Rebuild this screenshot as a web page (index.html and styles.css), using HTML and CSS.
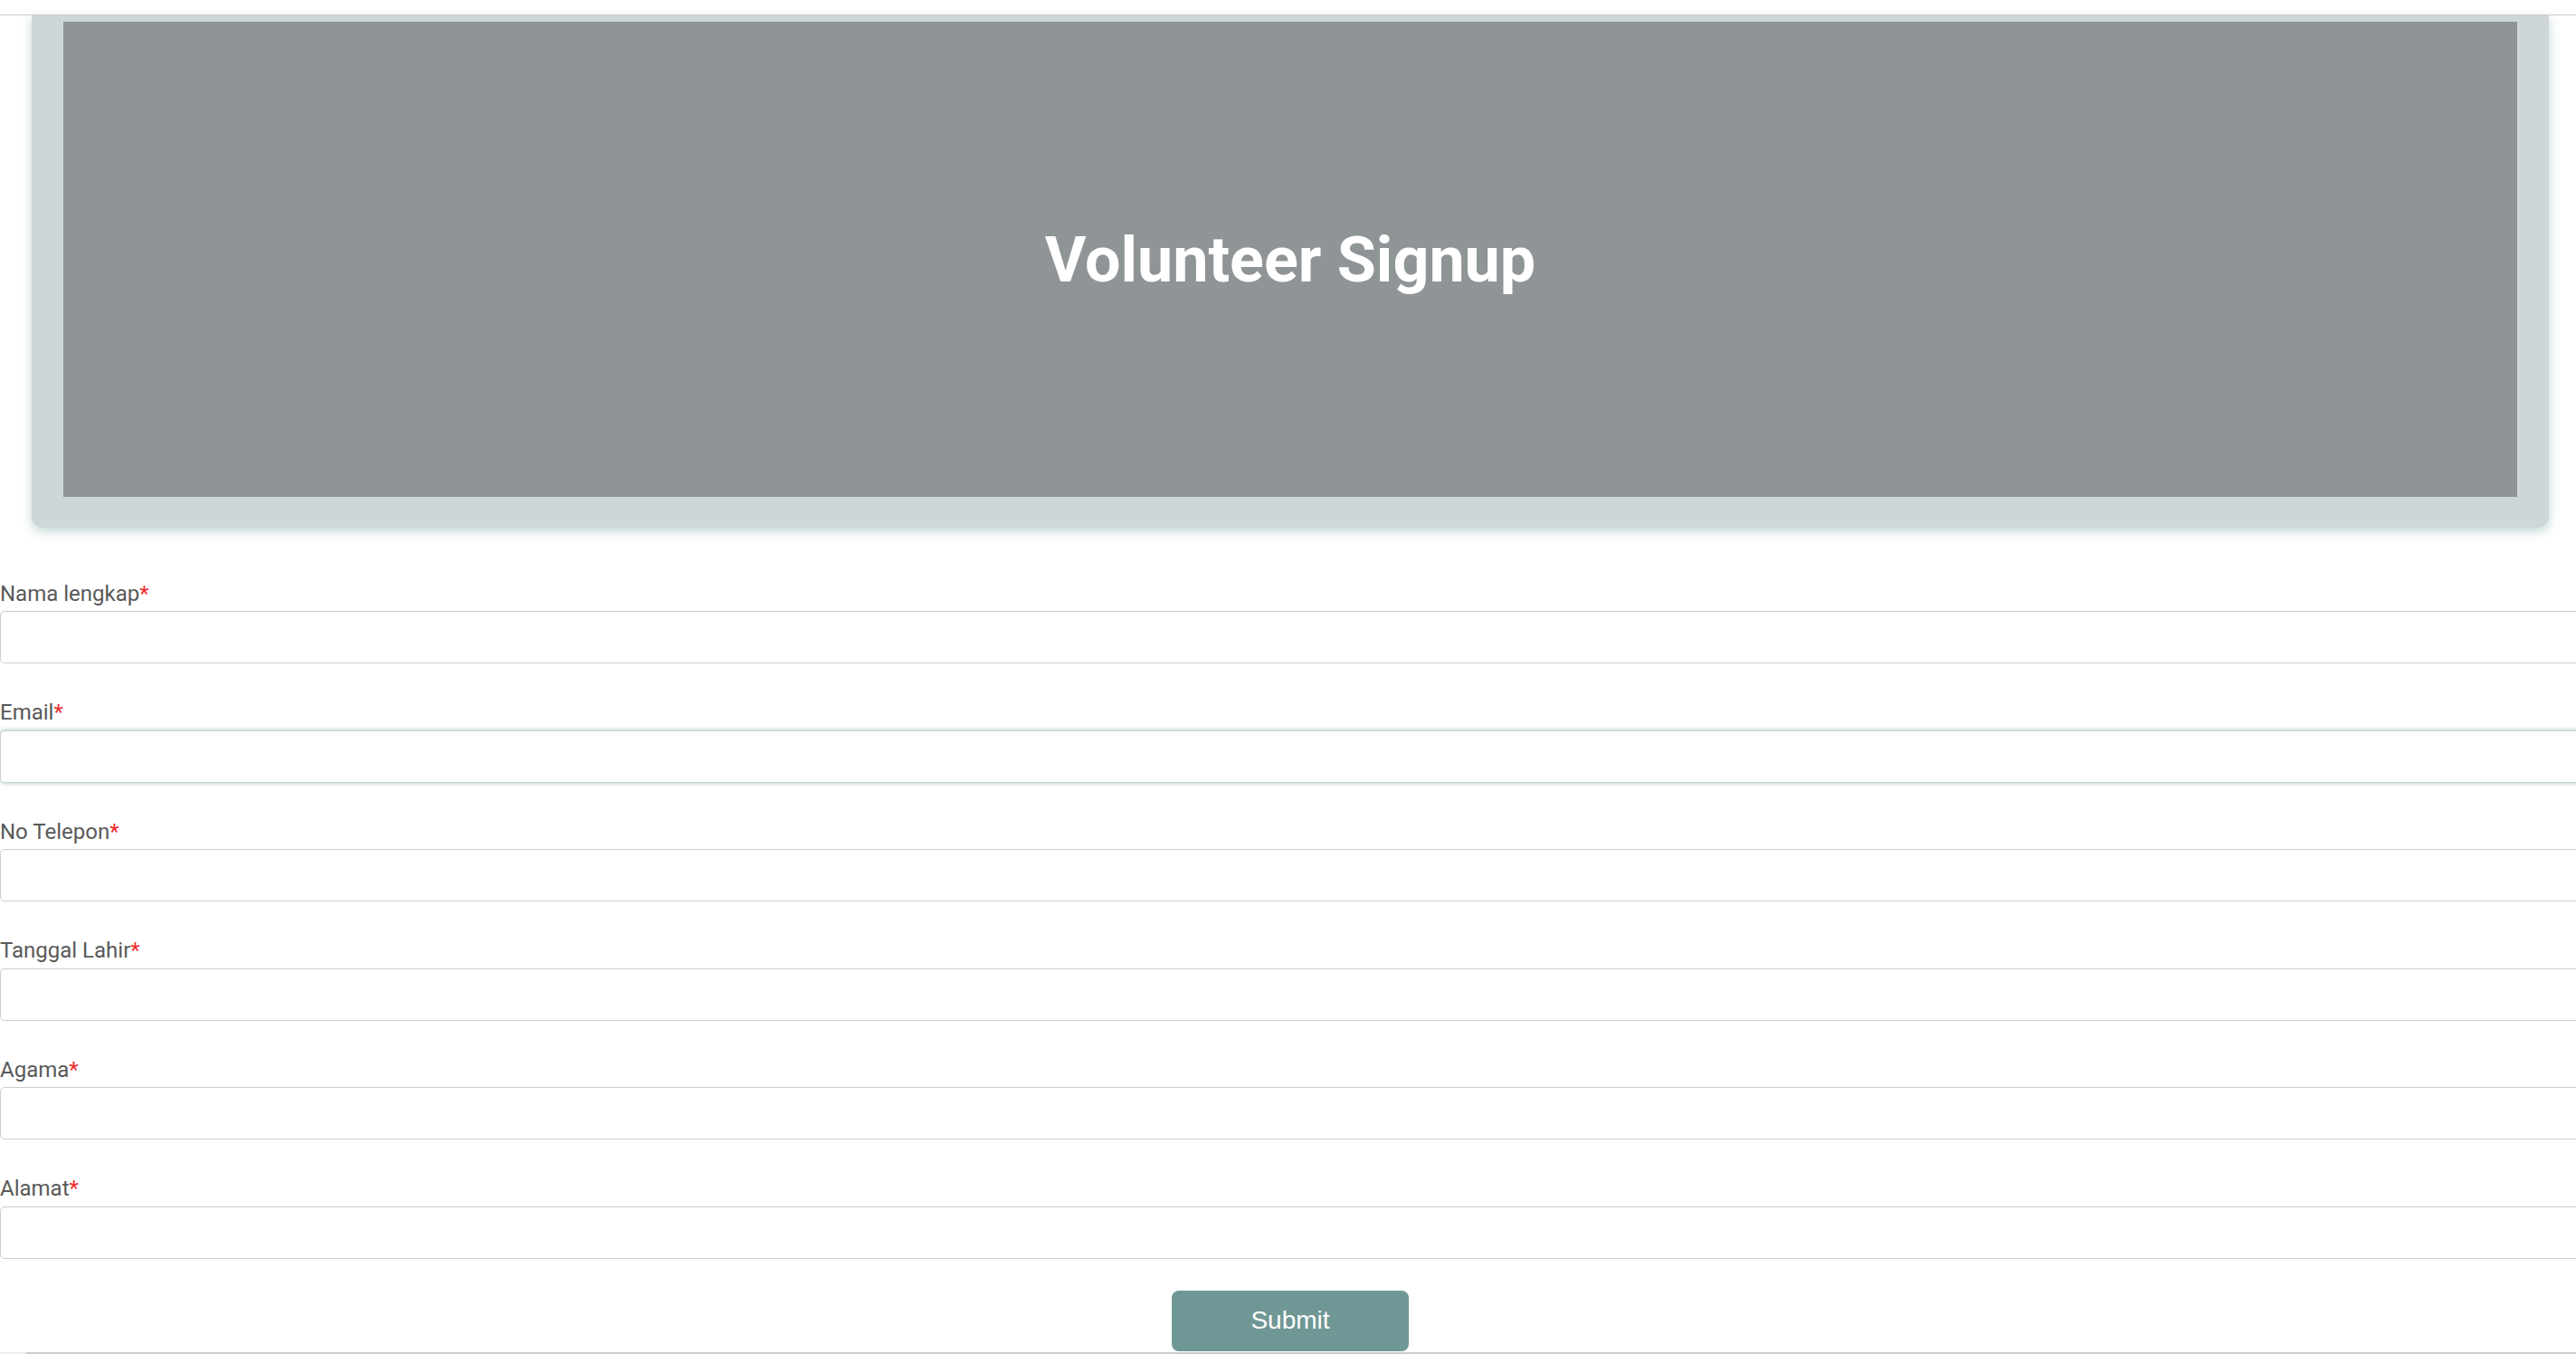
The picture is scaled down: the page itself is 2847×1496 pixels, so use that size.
FILE: index.html
```html
<!DOCTYPE html>
<html lang="id">
<head>
<meta charset="utf-8">
<title>Volunteer Signup</title>
<link rel="stylesheet" href="styles.css">
</head>
<body>
<div class="topbar"></div>
<section class="card">
  <div class="banner">
    <h1 class="title">Volunteer Signup</h1>
  </div>
</section>
<form class="form">
  <div class="field">
    <label class="label">Nama lengkap<span class="req">*</span></label>
    <input class="input" type="text">
  </div>
  <div class="field">
    <label class="label">Email<span class="req">*</span></label>
    <input class="input input-focus" type="email">
  </div>
  <div class="field">
    <label class="label">No Telepon<span class="req">*</span></label>
    <input class="input" type="text">
  </div>
  <div class="field">
    <label class="label">Tanggal Lahir<span class="req">*</span></label>
    <input class="input" type="text">
  </div>
  <div class="field">
    <label class="label">Agama<span class="req">*</span></label>
    <input class="input" type="text">
  </div>
  <div class="field">
    <label class="label">Alamat<span class="req">*</span></label>
    <input class="input" type="text">
  </div>
  <div class="actions">
    <button class="submit" type="button">Submit</button>
  </div>
</form>
<div class="footer-edge"></div>
</body>
</html>
```
FILE: styles.css
```css
html, body {
  margin: 0;
  padding: 0;
  background: #ffffff;
  overflow: hidden;
}
body {
  font-family: Roboto, "Liberation Sans", Arial, sans-serif;
  height: 1496px;
}
.topbar {
  height: 16px;
  border-bottom: 1px solid #cbcbcb;
  position: relative;
  z-index: 2;
}
.card {
  margin: 0 30px 0 35px;
  padding: 7px 35px 34px;
  background: #cfd6d9;
  border-radius: 0 0 12px 12px;
  box-shadow: 0 4px 12px rgba(80, 140, 135, 0.35);
}
.banner {
  height: 525px;
  background: #8f9496;
  display: flex;
  align-items: center;
  justify-content: center;
}
.title {
  margin: 0;
  font-family: Roboto, "Liberation Sans", sans-serif;
  font-weight: 700;
  font-size: 70px;
  line-height: 1;
  color: #ffffff;
}
.form {
  margin-top: 59.5px;
  display: flex;
  flex-direction: column;
}
.field {
  display: flex;
  flex-direction: column;
}
.field + .field {
  margin-top: 41.1px;
}
.label {
  font-size: 24px;
  line-height: 26px;
  color: #595959;
  margin-bottom: 6.5px;
}
.req {
  color: #f02828;
}
.input {
  box-sizing: border-box;
  width: calc(100% + 20px);
  height: 58px;
  margin: 0;
  border: 1px solid #cccccc;
  border-radius: 5px;
  background: #ffffff;
  font-size: 22px;
  padding: 0 12px;
  outline: none;
}
.input-focus {
  border-color: #c4d2d2;
  box-shadow: 0 0 4px 1px rgba(110, 150, 150, 0.45);
}
.actions {
  margin-top: 35px;
  display: flex;
  justify-content: center;
  padding-left: 5px;
}
.submit {
  width: 262px;
  height: 67px;
  border: none;
  border-radius: 8px;
  background: #6f9795;
  color: #ffffff;
  font-family: "Liberation Sans", Arial, sans-serif;
  font-size: 28px;
  cursor: pointer;
}
.footer-edge {
  margin: 1px 0 0 29px;
  border-top: 2px solid #cccccc;
  box-shadow: -29px 0 0 0 #eeeeee;
}
```
